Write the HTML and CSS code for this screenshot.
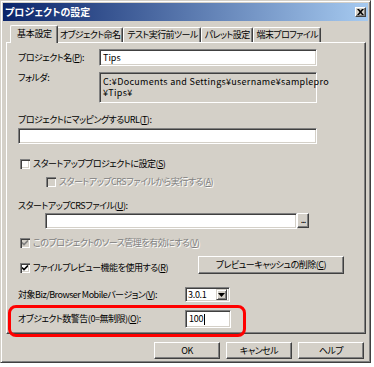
FILE: index.html
```html
<!DOCTYPE html>
<html lang="ja">
<head>
<meta charset="utf-8">
<title>プロジェクトの設定</title>
<link rel="stylesheet" href="styles.css">
</head>
<body>
<div class="window">
  <div class="titlebar">
    <span class="title">プロジェクトの設定</span>
    <span class="close"><svg width="7" height="6" viewBox="0 0 7 6"><path d="M0 0h2l1.5 1.7L5 0h2L4.5 3 7 6H5L3.5 4.3 2 6H0l2.5-3z" fill="#000"/></svg></span>
  </div>
  <div class="tabs">
    <div class="tab active">基本設定</div>
    <div class="tab">オブジェクト命名</div>
    <div class="tab">テスト実行前ツール</div>
    <div class="tab">パレット設定</div>
    <div class="tab">端末プロファイル</div>
  </div>
  <div class="panel">
    <div class="row r-name">
      <span class="lbl w81">プロジェクト名(<u>P</u>):</span>
      <div class="field name-field">Tips</div>
    </div>
    <div class="row r-folder">
      <span class="lbl w81">フォルダ:</span>
      <div class="field readonly folder-field"><div>C:¥Documents and Settings¥username¥samplepro</div><div>¥Tips¥</div></div>
    </div>
    <div class="lbl url-lbl">プロジェクトにマッピングするURL(<u>T</u>):</div>
    <div class="field url-field"></div>
    <div class="row check r-cb1"><span class="cb"></span><span>スタートアッププロジェクトに設定(<u>S</u>)</span></div>
    <div class="row check r-cb2 disabled"><span class="cb off"></span><span>スタートアップCRSファイルから実行する(<u>A</u>)</span></div>
    <div class="lbl crs-lbl">スタートアップCRSファイル(<u>U</u>):</div>
    <div class="row r-crs">
      <div class="field crs-field"></div>
      <div class="btn dots">...</div>
    </div>
    <div class="row check r-cb3 disabled"><span class="cb off"><svg width="6" height="6" viewBox="0 0 6 6"><path d="M0 2.5l2 2 4-4" fill="none" stroke="#808080" stroke-width="1.6"/></svg></span><span>このプロジェクトのソース管理を有効にする(<u>V</u>)</span></div>
    <div class="row r-preview">
      <div class="check cb4"><span class="cb"><svg width="6" height="6" viewBox="0 0 6 6"><path d="M0 2.5l2 2 4-4" fill="none" stroke="#000" stroke-width="1.6"/></svg></span><span>ファイルプレビュー機能を使用する(<u>R</u>)</span></div>
      <div class="btn clear-btn">プレビューキャッシュの削除(<u>C</u>)</div>
    </div>
    <div class="row r-version">
      <span class="lbl w167">対象Biz/Browser Mobileバージョン(<u>V</u>):</span>
      <div class="field select"><span class="sel-val">3.0.1</span><span class="arrow"><svg width="7" height="4" viewBox="0 0 7 4"><path d="M0 0h7L3.5 4z" fill="#000"/></svg></span></div>
    </div>
    <div class="highlight">
      <div class="row r-warn">
        <span class="lbl w160">オブジェクト数警告(0=無制限)(<u>O</u>):</span>
        <div class="field warn-field">100<span class="caret"></span></div>
      </div>
    </div>
  </div>
  <div class="buttons">
    <div class="btn dlg">OK</div>
    <div class="btn dlg">キャンセル</div>
    <div class="btn dlg">ヘルプ</div>
  </div>
</div>
</body>
</html>
```

FILE: styles.css
```css
* {
  box-sizing: border-box;
  margin: 0;
  padding: 0;
}

html, body {
  background: #ffffff;
}

body {
  margin: 0;
  font-family: "Noto Sans CJK JP", sans-serif;
  font-size: 9px;
  line-height: 12px;
  color: #000;
  font-feature-settings: "palt";
  letter-spacing: -0.5px;
}

u {
  text-decoration: underline;
  text-underline-offset: 1px;
}

.window {
  width: 371px;
  height: 363px;
  background: #d4d0c8;
  border: 1px solid;
  border-color: #d4d0c8 #404040 #404040 #d4d0c8;
  box-shadow: inset 1px 1px #ffffff, inset -1px -1px #808080;
  padding: 2px;
  display: flex;
  flex-direction: column;
}

.titlebar {
  height: 18px;
  flex: none;
  background: linear-gradient(to right, #0a246a, #a6caf0);
  display: flex;
  align-items: center;
  justify-content: space-between;
  padding: 0 2px 0 2px;
}

.title {
  color: #fff;
  font-weight: bold;
  font-size: 10px;
  line-height: 14px;
  letter-spacing: 0;
}

.close {
  width: 11px;
  height: 10px;
  background: #d4d0c8;
  border: 1px solid;
  border-color: #ffffff #404040 #404040 #ffffff;
  box-shadow: inset -1px -1px #808080;
  display: flex;
  align-items: center;
  justify-content: center;
}

.tabs {
  height: 21px;
  flex: none;
  display: flex;
  align-items: flex-end;
  padding-left: 9px;
  position: relative;
  z-index: 1;
}

.tab {
  height: 15px;
  padding: 0 2px 0 3px;
  border-left: 1px solid #ffffff;
  border-top: 1px solid #ffffff;
  border-right: 1px solid #404040;
  box-shadow: inset -1px 0 #808080;
  border-radius: 2px 2px 0 0;
  line-height: 13px;
  white-space: nowrap;
  background: #d4d0c8;
  letter-spacing: -0.6px;
}

.tab.active {
  height: 18px;
  margin: 0 -2px -1px -2px;
  padding: 0 5px 0 6px;
  line-height: 15px;
  position: relative;
  z-index: 2;
  letter-spacing: -0.3px;
}

.panel {
  height: 292px;
  flex: none;
  margin: 0 2px 0 3px;
  border: 1px solid;
  border-color: #ffffff #404040 #404040 #ffffff;
  box-shadow: inset -1px -1px #808080;
  padding: 0 0 0 11px;
}

.row {
  display: flex;
  align-items: center;
}

.lbl {
  display: block;
  white-space: nowrap;
}

.w81 { width: 81px; flex: none; }
.w167 { width: 167px; flex: none; }
.w160 { width: 160px; flex: none; }

.field {
  background: #ffffff;
  border: 1px solid;
  border-color: #808080 #ffffff #ffffff #808080;
  box-shadow: inset 1px 1px #404040, inset -1px -1px #d4d0c8;
  padding: 0 3px;
  white-space: nowrap;
  letter-spacing: 0;
}

.field.readonly {
  background: #d4d0c8;
}

.r-name {
  margin-top: 6px;
  height: 17px;
}

.name-field {
  width: 218px;
  height: 17px;
  line-height: 15px;
}

.r-folder {
  margin-top: 6px;
  align-items: flex-start;
}

.folder-field {
  width: 218px;
  height: 31px;
  padding: 3px 2px 0 3px;
  line-height: 11px;
  letter-spacing: 0.3px;
  display: flex;
  flex-direction: column;
}

.url-lbl {
  margin-top: 11px;
}

.url-field {
  margin-top: 2px;
  width: 299px;
  height: 16px;
}

.check {
  display: flex;
  align-items: center;
  gap: 3px;
  height: 14px;
  white-space: nowrap;
}

.cb {
  width: 10px;
  height: 10px;
  flex: none;
  background: #ffffff;
  box-shadow: inset 1px 1px #808080, inset 2px 2px #404040, inset -1px -1px #ffffff, inset -2px -2px #d4d0c8;
  display: flex;
  align-items: center;
  justify-content: center;
}

.cb.off {
  background: #d4d0c8;
}

.disabled {
  color: #808080;
  text-shadow: 1px 1px 0 #ffffff;
}

.r-cb1 {
  margin-top: 13px;
  margin-left: 2px;
}

.r-cb2 {
  margin-top: 4px;
  margin-left: 28px;
}

.crs-lbl {
  margin-top: 11px;
}

.r-crs {
  margin-top: 1px;
  margin-left: 27px;
  height: 16px;
  align-items: flex-start;
}

.crs-field {
  width: 252px;
  height: 16px;
}

.btn {
  background: #d4d0c8;
  border: 1px solid;
  border-color: #ffffff #404040 #404040 #ffffff;
  box-shadow: inset -1px -1px #808080;
  display: flex;
  align-items: center;
  justify-content: center;
  white-space: nowrap;
}

.dots {
  width: 12px;
  height: 15px;
  font-size: 9px;
  line-height: 9px;
  align-items: flex-end;
  padding-bottom: 3px;
  letter-spacing: -1px;
}

.r-cb3 {
  margin-top: 7px;
  margin-left: 2px;
}

.r-preview {
  margin-top: 6px;
  height: 18px;
  align-items: flex-start;
}

.cb4 {
  margin-top: 5px;
  margin-left: 2px;
}

.clear-btn {
  margin-left: auto;
  margin-right: 21px;
  width: 146px;
  height: 18px;
}

.r-version {
  margin-top: 13px;
  height: 15px;
}

.select {
  width: 45px;
  height: 15px;
  display: flex;
  align-items: center;
  justify-content: space-between;
  padding: 0 2px 0 2px;
}

.sel-val {
  line-height: 11px;
  letter-spacing: -0.3px;
}

.arrow {
  width: 11px;
  height: 11px;
  background: #d4d0c8;
  border: 1px solid;
  border-color: #d4d0c8 #404040 #404040 #d4d0c8;
  box-shadow: inset 1px 1px #ffffff, inset -1px -1px #808080;
  display: flex;
  align-items: center;
  justify-content: center;
}

.highlight {
  margin-top: 3px;
  margin-left: -10px;
  width: 238px;
  height: 32px;
  border: 3px solid #ff0000;
  border-radius: 8px;
  padding: 2px 0 0 7px;
  position: relative;
}

.r-warn {
  height: 18px;
}

.warn-field {
  margin-left: 7px;
  width: 46px;
  height: 18px;
  display: flex;
  align-items: center;
  padding-left: 3px;
  letter-spacing: -0.3px;
}

.caret {
  width: 1px;
  height: 11px;
  background: #000;
  margin-left: 1px;
}

.buttons {
  margin-top: 8px;
  display: flex;
  justify-content: flex-end;
  gap: 6px;
  padding-right: 4px;
}

.dlg {
  width: 66px;
  height: 17px;
}
```
